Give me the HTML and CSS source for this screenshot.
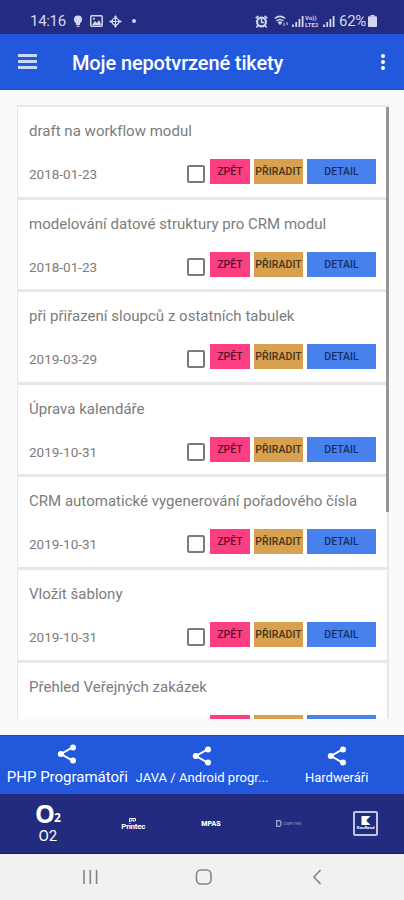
FILE: index.html
```
<!DOCTYPE html>
<html lang="cs">
<head>
<meta charset="utf-8">
<title>Moje nepotvrzené tikety</title>
<link rel="stylesheet" href="styles.css">
</head>
<body>
<svg width="0" height="0" class="defs"><defs>
<symbol id="share" viewBox="0 0 20 20"><path d="M16 3.2 4 10l12 6.8" fill="none" stroke="currentColor" stroke-width="1.9"/><circle cx="16" cy="3.4" r="3"/><circle cx="3.8" cy="10" r="3"/><circle cx="16" cy="16.6" r="3"/></symbol>
<symbol id="signal" viewBox="0 0 12 12"><path d="M1 12V9.5M4.2 12V7M7.4 12V4M10.6 12V1" stroke="currentColor" stroke-width="1.8"/></symbol>
</defs></svg>
<header class="status">
  <span class="clock">14:16</span>
  <svg class="bulb" width="10" height="13" viewBox="0 0 10 13"><circle cx="5" cy="4.4" r="4"/><path d="M3 7h4v3H3zM3.6 10.8h2.8V12H3.6z"/></svg>
  <svg class="photo" width="13" height="12" viewBox="0 0 13 12"><rect x=".8" y=".8" width="11.4" height="10.4" rx="1" fill="none" stroke="currentColor" stroke-width="1.5"/><path d="m2 10 3-4 2 2 2-3 2.500 5z"/><circle cx="4" cy="3.700" r="1"/></svg>
  <svg class="move" width="13" height="13" viewBox="0 0 14 14"><circle cx="7" cy="7" r="3.500" fill="none" stroke="currentColor" stroke-width="1.300"/><path d="M7 1v12M1 7h12" fill="none" stroke="currentColor" stroke-width="1.300"/><path d="m7 0 2 3H5zM7 14l2-3H5zM0 7l3-2v4zM14 7l-3-2v4z"/></svg>
  <i class="dot"></i>
  <div class="right">
    <svg class="alarm" width="13" height="13" viewBox="0 0 13 13"><circle cx="6.500" cy="7" r="4.400" fill="none" stroke="currentColor" stroke-width="2.200"/><path d="M6.500 4v3.500H9M.7 3.200 3.500 1M12.300 3.200 9.500 1M2.800 10.500l-1.500 2M10.200 10.500l1.500 2" fill="none" stroke="currentColor" stroke-width="1.600"/></svg>
    <svg class="wifi" width="15" height="12" viewBox="0 0 15 12"><path d="M.8 3.500Q6 -.8 11.200 3.500M2.500 6Q6 3 9.500 6" fill="none" stroke="currentColor" stroke-width="1.500"/><path d="m3.700 7.200 2.300 3 2.300-3Q6 5.500 3.700 7.200z"/><path d="M10 11V8M13 7v3" stroke="currentColor"/></svg>
    <svg class="sig" width="12" height="12"><use href="#signal"/></svg>
    <span class="volte"><span>Vo))</span><span>LTE2</span></span>
    <svg class="sig" width="12" height="12"><use href="#signal"/></svg>
    <span class="pct">62%</span>
    <svg class="batt" width="9" height="12" viewBox="0 0 9 12"><path d="M2.500 0h4v1.500H2.500z"/><rect y="1.300" width="9" height="10.700" rx="1"/></svg>
  </div>
</header>
<div class="appbar">
  <span class="burger"><i></i><i></i><i></i></span>
  <h1>Moje nepotvrzené tikety</h1>
  <span class="more"><i></i><i></i><i></i></span>
</div>
<main>
  <div class="list">
    <article><h2>draft na workflow modul</h2><div class="row"><time>2018-01-23</time><i class="check"></i><b class="back">ZPĚT</b><b class="assign">PŘIRADIT</b><b class="detail">DETAIL</b></div></article>
    <article><h2>modelování datové struktury pro CRM modul</h2><div class="row"><time>2018-01-23</time><i class="check"></i><b class="back">ZPĚT</b><b class="assign">PŘIRADIT</b><b class="detail">DETAIL</b></div></article>
    <article><h2>při přiřazení sloupců z ostatních tabulek</h2><div class="row"><time>2019-03-29</time><i class="check"></i><b class="back">ZPĚT</b><b class="assign">PŘIRADIT</b><b class="detail">DETAIL</b></div></article>
    <article><h2>Úprava kalendáře</h2><div class="row"><time>2019-10-31</time><i class="check"></i><b class="back">ZPĚT</b><b class="assign">PŘIRADIT</b><b class="detail">DETAIL</b></div></article>
    <article><h2>CRM automatické vygenerování pořadového čísla</h2><div class="row"><time>2019-10-31</time><i class="check"></i><b class="back">ZPĚT</b><b class="assign">PŘIRADIT</b><b class="detail">DETAIL</b></div></article>
    <article><h2>Vložit šablony</h2><div class="row"><time>2019-10-31</time><i class="check"></i><b class="back">ZPĚT</b><b class="assign">PŘIRADIT</b><b class="detail">DETAIL</b></div></article>
    <article><h2>Přehled Veřejných zakázek</h2><div class="row"><time></time><b class="back"></b><b class="assign"></b><b class="detail"></b></div></article>
    <i class="thumb"></i>
  </div>
</main>
<nav class="tabs">
  <div class="tab first"><svg width="20" height="20"><use href="#share"/></svg><span>PHP Programátoři</span></div>
  <div class="tab mid"><svg width="20" height="20"><use href="#share"/></svg><span>JAVA / Android progr...</span></div>
  <div class="tab"><svg width="20" height="20"><use href="#share"/></svg><span>Hardweráři</span></div>
</nav>
<div class="brands">
  <div class="brand o2"><span class="o2logo"><span>O</span><span class="two">2</span></span><span class="o2name">O2</span></div>
  <div class="brand printec"><svg width="8" height="5" viewBox="0 0 8 5"><path d="M.5 4V.6h6V3M2 4V2h3v2" fill="none" stroke="currentColor"/></svg><span>Printec</span></div>
  <div class="brand mpas">MPAS</div>
  <div class="brand dc"><svg width="6" height="7" viewBox="0 0 6 7"><path d="M.7.7H3Q5 .7 5 3.500T3 6.300H.7z" fill="none" stroke="currentColor" stroke-width="1.300"/></svg><span>COMPUTERS</span></div>
  <div class="brand kauf"><div class="kbox"><svg width="10" height="9" viewBox="0 0 10 10"><path d="M0 0h4v10H0zM5 0h5L6.500 3.700H5zM5 6.300h1.500L10 10H5zM4 0h1v10H4zM4 4h2v2H4z"/></svg><span>Kaufland</span></div></div>
</div>
<footer>
  <svg class="keys" width="404" height="46" viewBox="0 0 404 46"><path d="M84 16v14M90.300 16v14M96.600 16v14"/><rect x="196.500" y="16" width="14.500" height="14" rx="4.500"/><path d="m320.500 16-6.500 7 6.500 7"/></svg>
</footer>
</body>
</html>
```
FILE: styles.css
```
* { box-sizing: border-box; }
body { margin: 0; width: 404px; height: 900px; overflow: hidden; background: #fafafa; font-family: Roboto, "Liberation Sans", sans-serif; display: flex; flex-direction: column; }
svg { fill: currentColor; flex: none; display: block; }
.defs { position: absolute; }
i { display: block; }
.status { height: 34px; flex: none; background: #232c80; color: #d3d6ee; display: flex; align-items: center; padding: 8px 27px 0 30px; font-size: 15px; }
.clock { width: 43px; letter-spacing: -.3px; }
.photo { margin-left: 7px; }
.move { margin-left: 6px; }
.dot { width: 4px; height: 4px; border-radius: 2px; background: #d3d6ee; margin-left: 10px; }
.right { display: flex; align-items: center; margin-left: auto; }
.wifi { margin-left: 6px; }
.sig { margin-left: 3px; }
.volte { display: flex; flex-direction: column; font-size: 6px; line-height: 7px; font-weight: 700; width: 15px; margin-left: 1px; letter-spacing: .1px; }
.volte + .sig { margin-left: 3px; }
.pct { margin-left: 4px; letter-spacing: -.3px; width: 29px; }
.appbar { height: 56px; flex: none; background: #2158dc; border-bottom: 1px solid #2d4fc4; display: flex; align-items: center; padding: 0 19px 0 18px; color: #fff; }
.burger { display: grid; gap: 3px; width: 19px; margin-right: 35px; }
.burger i { height: 3px; background: #c8d6f8; }
h1 { margin: 2px 0 0; font-size: 20px; font-weight: 500; letter-spacing: -.13px; white-space: nowrap; }
.more { margin-left: auto; display: grid; gap: 2px; }
.more i { width: 4px; height: 4px; border-radius: 2px; background: #fff; }
main { flex: none; height: 645px; padding: 15px 14px 15px 17px; }
.list { height: 614px; overflow: hidden; position: relative; border-top: 2px solid #e9e9e9; }
article { height: 92.600px; margin-right: 1px; background: #fff; border: 1px solid #e7e7e7; border-width: 0 2px 3px 1px; padding: 14px 10px 0 11px; }
h2 { margin: 0; font-size: 15px; line-height: 20px; font-weight: 400; color: #7c7c7c; white-space: nowrap; letter-spacing: .02px; }
.row { display: flex; margin-top: 16px; height: 27px; }
time { width: 158px; font-size: 13.500px; line-height: 34px; color: #7c7c7c; }
.check { width: 18px; height: 18px; border: 2px solid #7b7b7b; border-radius: 2px; margin: 8px 5px 0 0; }
.row b { height: 25px; margin: 2px 4px 0 0; font-size: 10.500px; line-height: 25px; font-weight: 500; text-align: center; white-space: nowrap; }
.row .back { width: 40px; background: #fd3e81; color: #54122f; }
.row .assign { width: 49px; background: #d7a14f; color: #46341c; letter-spacing: .1px; }
.row .detail { width: 69px; background: #4681ee; color: #172f68; margin-right: 0; }
article:last-of-type time { margin-right: 23px; }
.thumb { position: absolute; top: -1px; right: 1px; width: 3px; height: 406px; background: #969696; }
.tabs { height: 59px; flex: none; background: #2158dc; border-top: 1px solid #194acd; color: #fff; display: grid; grid-template-columns: 1fr 1fr 1fr; }
.tab { display: flex; flex-direction: column; align-items: center; padding-top: 10px; font-size: 13px; line-height: 15px; white-space: nowrap; }
.tab span { margin-top: 4px; }
.mid span { letter-spacing: .05px; }
.first { font-size: 15px; padding-top: 8px; }
.first span { margin-top: 6px; }
.brands { height: 60px; flex: none; background: #222b7e; border-bottom: 1px solid #171d70; display: flex; color: #fff; }
.brand { width: 20%; display: flex; flex-direction: column; align-items: center; justify-content: center; }
.o2 { padding-left: 15px; }
.o2logo { display: flex; font: 700 25px/21px "Open Sans", sans-serif; height: 22px; margin-top: 1px; }
.two { font-size: 12px; line-height: 14px; margin-top: 8px; margin-left: -1px; }
.o2name { font-size: 15px; line-height: 17px; margin-top: 3px; }
.printec { padding-left: 24px; font-weight: 700; font-size: 8px; line-height: 7px; letter-spacing: -.3px; }
.mpas { padding-left: 18px; font-size: 7px; font-weight: 900; }
.dc { flex-direction: row; padding-left: 12px; font-size: 3.200px; gap: 1px; color: #9fa4cf; }
.kauf { padding-left: 4px; }
.kbox { width: 25px; height: 25px; border: 2px solid #c0c4e1; border-radius: 2px; display: flex; flex-direction: column; align-items: center; padding-top: 3px; }
.kbox span { font-size: 4.400px; font-weight: 700; line-height: 6px; }
footer { height: 46px; flex: none; background: #f1f1f1; }
.keys { fill: none; stroke: #858585; stroke-width: 1.600; }
```
